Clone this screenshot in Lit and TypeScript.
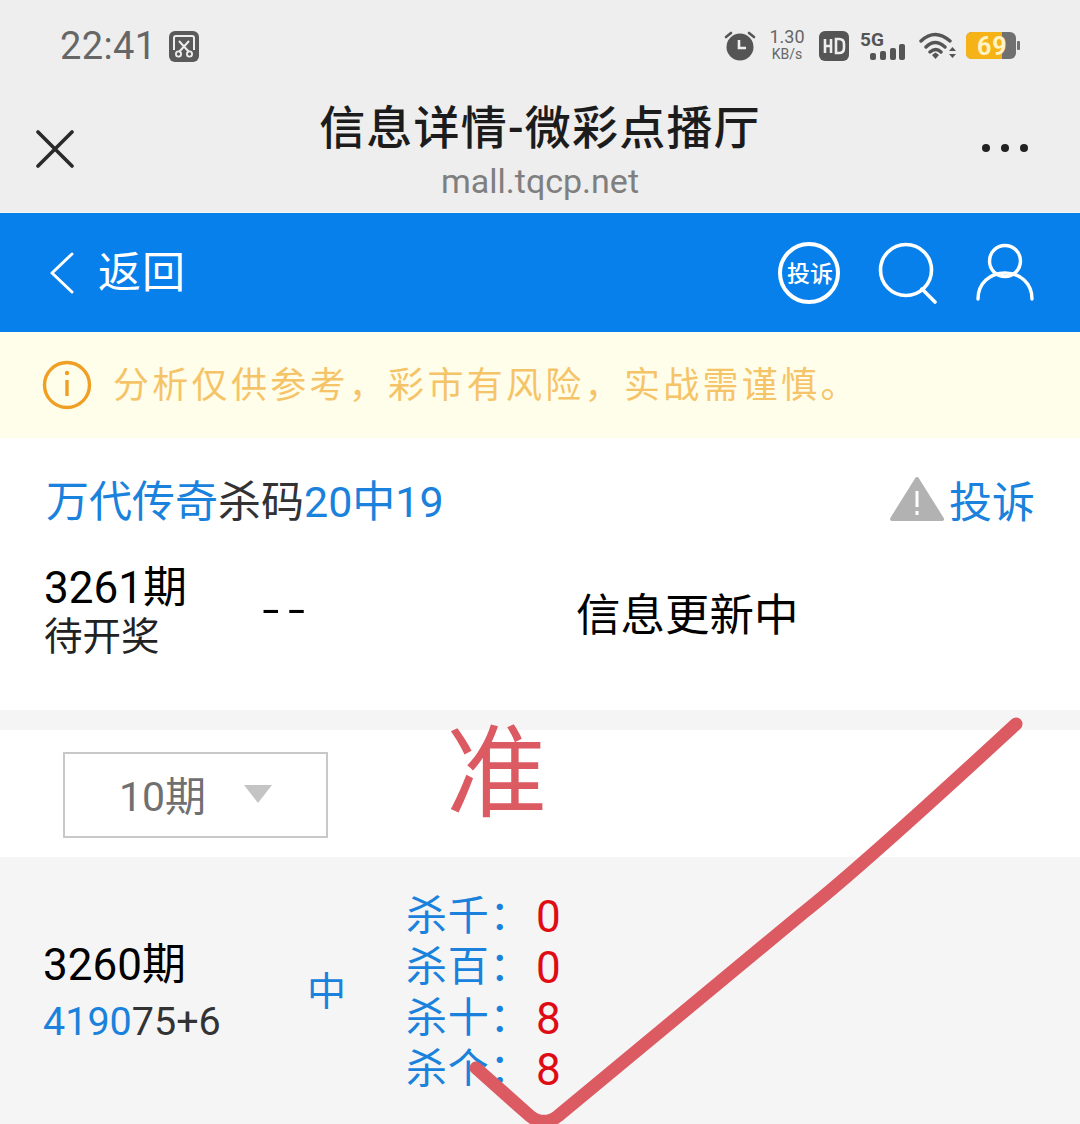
import { LitElement, html, css } from "lit";
import { customElement } from "lit/decorators.js";

const F = `Roboto, "Noto Sans CJK SC", sans-serif`;

@customElement("app-root")
export class AppRoot extends LitElement {
  static styles = css`
    :host { display: block; width: 1080px; height: 1124px; overflow: hidden; position: relative; background: #f5f5f5;
      font-family: Roboto, "Noto Sans CJK SC", sans-serif; color: #000; }
    .chrome { height: 212px; background: #eeeeee; box-sizing: border-box; }
    .status { height: 90px; display: flex; align-items: center; padding: 2px 60px 0 60px; box-sizing: border-box; }
    .time { font-size: 38px; color: #666; line-height: 46px; width: 109px; letter-spacing: .4px; }
    .status svg { display: block; }
    .sp { flex: 1; }
    .sticons { display: flex; align-items: center; }
    .speed { width: 36px; margin: 0 14px 0 13px; color: #666; text-align: center; font-size: 18px; line-height: 18px; margin-bottom: 2px; }
    .speed small { display: block; font-size: 14px; line-height: 18px; margin-top: -1px; }
    .nav { height: 122px; display: grid; grid-template-columns: 1fr auto 1fr; align-items: start; padding: 0 51px 0 36px; }
    .title { text-align: center; margin-left: 15px; }
    .title b { display: block; font-weight: 500; font-size: 46px; line-height: 56px; color: #1c1c1c; margin-top: 10px; letter-spacing: 1.2px; }
    .title span { display: block; font-size: 34px; line-height: 40px; color: #7f7f7f; margin-top: 5px; }
    .close { margin-top: 40px; }
    .dots { margin-top: 51px; justify-self: end; }
    .blue { height: 119px; margin-top: 1px; background: #0780ec; display: flex; align-items: center; padding: 0 46px 0 48px; color: #fff; }
    .back { font-size: 43px; margin-left: 22px; letter-spacing: 1px; padding-bottom: 8px; }
    .ticon { width: 62px; height: 62px; border: 4px solid #fff; border-radius: 50%; box-sizing: border-box; display: flex; align-items: center; justify-content: center; font-size: 23px; font-weight: 500; white-space: nowrap; color: #fff; padding: 0 0 2px 2px; }
    .bicons { display: flex; align-items: center; gap: 38px; }
    .tip { height: 106px; background: #fffeea; display: flex; align-items: center; padding-left: 42px; font-size: 36px; color: #f6c468; gap: 21px; letter-spacing: 3.3px; white-space: nowrap; }
    .tip span { padding-bottom: 6px; }
    .info { height: 272px; background: #fff; box-sizing: border-box; padding: 32px 45px 0 46px; }
    .head { display: flex; align-items: center; height: 56px; font-size: 43px; }
    .link { color: #1a82dc; }
    .dark { color: #333; }
    .complain { display: flex; align-items: center; gap: 5px; padding-top: 2px; }
    .cur { display: flex; align-items: flex-start; margin-top: 36px; margin-left: -2px; color: #000; }
    .cur .a { width: 218px; }
    .cur .a b { display: block; font-weight: 400; font-size: 44px; line-height: 50px; margin-top: 1px; }
    .cur .a .wait { display: block; font-size: 38.5px; line-height: 42px; color: #222; margin-top: 3px; }
    .cur .dash { width: 314px; font-size: 62px; font-weight: 300; line-height: 50px; margin-top: 23px; letter-spacing: 8px; }
    .cur .msg { font-size: 44.5px; line-height: 50px; margin-top: 29px; }
    .gap { height: 20px; }
    .sel { height: 127px; background: #fff; padding: 22px 0 0 63px; box-sizing: border-box; }
    .box { width: 265px; height: 86px; box-sizing: border-box; border: 2px solid #c8c8c8; display: flex; align-items: center; padding-left: 54px; font-size: 41px; color: #707070; gap: 38px; padding-bottom: 5px; }
    .tri { width: 0; height: 0; border-left: 14px solid transparent; border-right: 14px solid transparent; border-top: 18px solid #c4c4c4; margin-top: 2px; }
    .row { display: flex; align-items: flex-start; padding: 33px 0 0 44px; }
    .row .a { width: 263px; padding-top: 50px; }
    .row .a b { display: block; font-weight: 400; font-size: 44px; line-height: 50px; margin-left: -1px; }
    .row .a .nums { display: block; font-size: 39.5px; line-height: 46px; color: #333; margin-top: 9px; margin-left: -1px; }
    .row .z { width: 99px; font-size: 39px; color: #1a82dc; padding-top: 77px; line-height: 50px; }
    .kills { display: flex; flex-direction: column; }
    .kill { display: flex; height: 51px; align-items: center; font-size: 41px; color: #1a82dc; }
    .kill .k { width: 130px; padding-bottom: 7px; letter-spacing: .8px; }
    .kill .v { color: #e00c14; font-size: 44px; padding-top: 2px; }
    .zhun { position: absolute; left: 446px; top: 715px; font-size: 101px; line-height: 120px; color: #dc5a62; }
    .check { position: absolute; left: 0; top: 0; pointer-events: none; }
  `;

  render() {
    const kills = [["杀千：", "0"], ["杀百：", "0"], ["杀十：", "8"], ["杀个：", "8"]];
    return html`
      <div class="chrome">
        <div class="status">
          <div class="time">22:41</div>
          <svg width="30" height="32" viewBox="0 0 30 32">
            <rect x="0" y="1" width="30" height="31" rx="6" fill="#5a5a5a"/>
            <path d="M5 20V8q0-2 2-2h16q2 0 2 2v12" fill="none" stroke="#eee" stroke-width="2"/>
            <path d="M10 11l10 11M20 11L10 22" stroke="#eee" stroke-width="2"/>
            <circle cx="9.5" cy="24" r="2.6" fill="none" stroke="#eee" stroke-width="1.8"/>
            <circle cx="20.5" cy="24" r="2.6" fill="none" stroke="#eee" stroke-width="1.8"/>
          </svg>
          <div class="sp"></div>
          <div class="sticons">
            <svg width="32" height="32" viewBox="0 0 32 32">
              <circle cx="16" cy="17" r="13.5" fill="#555"/>
              <path d="M15 10v8h7" fill="none" stroke="#eee" stroke-width="2.6"/>
              <path d="M2 7l5-4M30 7l-5-4" stroke="#555" stroke-width="2.6" stroke-linecap="round"/>
            </svg>
            <div class="speed">1.30<small>KB/s</small></div>
            <svg width="30" height="30" viewBox="0 0 30 30" style="margin-right:11px">
              <rect width="30" height="30" rx="6" fill="#555"/>
              <path d="M6 8v14M6 15h6M12 8v14" fill="none" stroke="#eee" stroke-width="2.6"/>
              <path d="M17 8v14h3q5 0 5-5v-4q0-5-5-5z" fill="none" stroke="#eee" stroke-width="2.6"/>
            </svg>
            <svg width="46" height="36" viewBox="0 0 46 36" style="margin-right:13px">
              <text x="0" y="18" font-size="19" font-weight="700" font-family=${F} fill="#555">5G</text>
              <rect x="10" y="25" width="6" height="7" rx="2" fill="#555"/>
              <rect x="20" y="23" width="6" height="9" rx="2" fill="#555"/>
              <rect x="30" y="20" width="6" height="12" rx="2" fill="#555"/>
              <rect x="39" y="16" width="6" height="16" rx="2" fill="#555"/>
            </svg>
            <svg width="38" height="30" viewBox="0 0 38 30" style="margin-right:9px">
              <path d="M2 10Q16-3 31 10M7 16q9-9 19 0M11 21q6-5 11 0" fill="none" stroke="#555" stroke-width="3.4" stroke-linecap="round"/>
              <path d="M13 24l3.5-2.5L20 24l-3.5 4z" fill="#555"/>
              <path d="M30 20l3.5-4 3.5 4zM30 23l3.5 4 3.5-4z" fill="#555"/>
            </svg>
            <svg width="54" height="30" viewBox="0 0 54 30">
              <rect x="0" y="1" width="50" height="27" rx="6" fill="#707070"/>
              <path d="M6 1h30v27H6q-6 0-6-6V7q0-6 6-6z" fill="#f6b318"/>
              <rect x="51" y="10" width="3" height="9" rx="1" fill="#707070"/>
              <text x="11" y="24" font-size="25" font-weight="700" font-family=${F} fill="#fff3c4" letter-spacing="1">69</text>
            </svg>
          </div>
        </div>
        <div class="nav">
          <svg class="close" width="38" height="38" viewBox="0 0 38 38"><path d="M2 2l34 34M36 2L2 36" stroke="#2a2a2a" stroke-width="3.6" stroke-linecap="round"/></svg>
          <div class="title"><b>信息详情-微彩点播厅</b><span>mall.tqcp.net</span></div>
          <svg class="dots" width="48" height="14" viewBox="0 0 48 14"><circle cx="5" cy="7" r="4" fill="#222"/><circle cx="24" cy="7" r="4" fill="#222"/><circle cx="43" cy="7" r="4" fill="#222"/></svg>
        </div>
      </div>
      <div class="blue">
        <svg width="28" height="42" viewBox="0 0 28 42"><path d="M24 2L4 21l20 19" fill="none" stroke="#fff" stroke-width="3" stroke-linecap="round" stroke-linejoin="round"/></svg>
        <div class="back">返回</div>
        <div class="sp"></div>
        <div class="bicons">
          <div class="ticon">投诉</div>
          <svg width="60" height="62" viewBox="0 0 60 62"><circle cx="28" cy="28" r="25.5" fill="none" stroke="#fff" stroke-width="3.6"/><path d="M44 47l13 13" stroke="#fff" stroke-width="3.6" stroke-linecap="round"/></svg>
          <svg width="58" height="60" viewBox="0 0 58 60"><circle cx="29" cy="18" r="15.5" fill="none" stroke="#fff" stroke-width="3.4"/><path d="M2 56c0-16 12-26 27-26s27 10 27 26" fill="none" stroke="#fff" stroke-width="3.4" stroke-linecap="round"/></svg>
        </div>
      </div>
      <div class="tip">
        <svg width="50" height="50" viewBox="0 0 50 50"><circle cx="25" cy="25" r="22.5" fill="none" stroke="#ef9f24" stroke-width="3.4"/><circle cx="25" cy="13" r="2.2" fill="#ef9f24"/><path d="M25 20v16" stroke="#ef9f24" stroke-width="3.4"/></svg>
        <span>分析仅供参考，彩市有风险，实战需谨慎。</span>
      </div>
      <div class="info">
        <div class="head">
          <span class="link">万代传奇</span><span class="dark">杀码</span><span class="link">20中19</span>
          <div class="sp"></div>
          <div class="complain">
            <svg width="54" height="46" viewBox="0 0 54 46"><path d="M27 3L52 43H2z" fill="#b2b2b2" stroke="#b2b2b2" stroke-width="4" stroke-linejoin="round"/><path d="M27 15v16M27 35v4" stroke="#fff" stroke-width="3"/></svg>
            <span class="link">投诉</span>
          </div>
        </div>
        <div class="cur">
          <div class="a"><b>3261期</b><span class="wait">待开奖</span></div>
          <div class="dash">--</div>
          <div class="msg">信息更新中</div>
        </div>
      </div>
      <div class="gap"></div>
      <div class="sel"><div class="box">10期<i class="tri"></i></div></div>
      <div class="row">
        <div class="a"><b>3260期</b><span class="nums"><span class="link">4190</span>75+6</span></div>
        <div class="z">中</div>
        <div class="kills">
          ${kills.map(([k, v]) => html`<div class="kill"><span class="k">${k}</span><span class="v">${v}</span></div>`)}
        </div>
      </div>
      <div class="zhun">准</div>
      <svg class="check" width="1080" height="1124" viewBox="0 0 1080 1124">
        <path d="M476 1068l54 48q14 11 28 0L803 913Q860 868 1016 724" fill="none" stroke="#dc5a62" stroke-width="13" stroke-linecap="round" stroke-linejoin="round"/>
      </svg>
    `;
  }
}
